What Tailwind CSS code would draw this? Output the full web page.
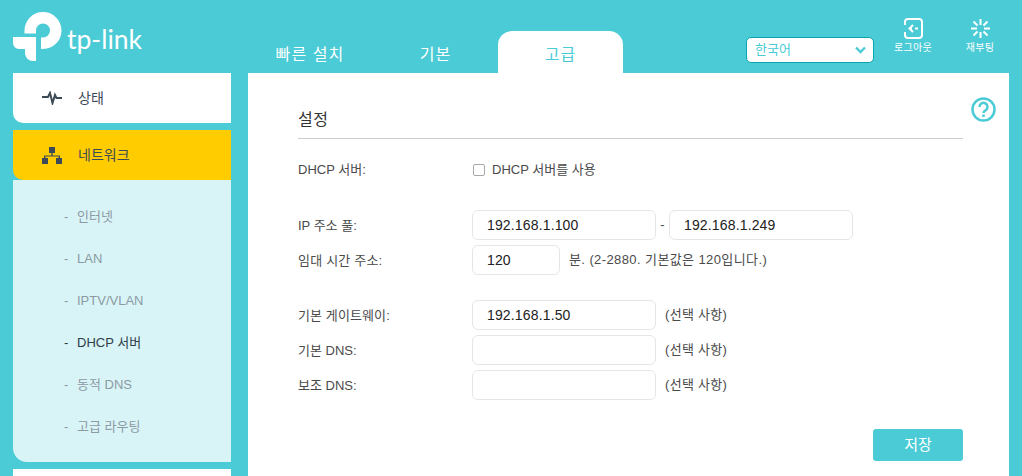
<!DOCTYPE html>
<html lang="ko">
  <head>
    <meta charset="UTF-8">
    <title>TP-Link DHCP</title>
    <script src="https://cdn.jsdelivr.net/npm/@tailwindcss/browser@4"></script>
  </head>
  <body class="h-[476px] w-[1022px] overflow-hidden bg-[#4acbd6] font-['Liberation_Sans','Noto_Sans_CJK_KR',sans-serif] text-[13px] text-[#4a4a4a]">
    <!-- header -->
    <header class="flex h-[73px]">
      <div class="flex w-[248px] shrink-0 items-start pl-[13px] pt-[12px]">
        <svg class="h-[50px] w-[49px] shrink-0" viewBox="0 0 49 50" fill="#fff">
          <path d="M17.250 21.500V18.500A12.750 12.750 0 1 1 30 31.250H28" fill="none" stroke="#fff" stroke-width="11.500"/>
          <path d="M0 25h23v24h-3a8 8 0 0 1-8-8v-4H6a6 6 0 0 1-6-6z"/>
        </svg>
        <span class="ml-[5px] mt-[11px] font-['Lato',sans-serif] text-[26.500px] leading-[32px] text-white">tp-link</span>
      </div>
      <nav class="flex h-full items-end text-[16px] text-white">
        <a class="flex h-[42px] w-[125px] items-center justify-center pt-[5px] pr-[1px] tracking-[1.100px]">빠른 설치</a>
        <a class="flex h-[42px] w-[125px] items-center justify-center pt-[5px] tracking-[1px]">기본</a>
        <a class="flex h-[42px] w-[125px] items-center justify-center rounded-t-[14px] bg-white pt-[5px] tracking-[1px] text-[#4acbd6]">고급</a>
      </nav>
      <div class="ml-[123px] flex h-full items-start">
        <div class="mt-[37px] flex h-[26px] w-[128px] items-center justify-between rounded-[5px] border border-[#0aa5b0] bg-white pl-[8px] pr-[7px] text-[13px] text-[#4acbd6]">
          <span>한국어</span>
          <svg class="h-[8px] w-[11px]" viewBox="0 0 11 8" fill="none" stroke="#4acbd6" stroke-width="2.400"><path d="M1 1.500l4.500 4.500 4.500-4.500"/></svg>
        </div>
        <div class="ml-[19px] mt-[18px] flex w-[40px] flex-col items-center text-[10px] leading-[12px] tracking-[0.3px] text-white">
          <svg class="h-[21px] w-[19px]" viewBox="0 0 19 21" fill="none" stroke="#fff" stroke-width="2">
            <path d="M1 7V4a3 3 0 0 1 3-3h11a3 3 0 0 1 3 3v13a3 3 0 0 1-3 3H4a3 3 0 0 1-3-3v-3"/>
            <path d="M9 7l-3.500 3.500L9 14M6 10.500h2M11 10.500h3"/>
          </svg>
          <span class="mt-[3px] whitespace-nowrap">로그아웃</span>
        </div>
        <div class="ml-[32px] mt-[18px] flex w-[30px] flex-col items-center text-[10px] leading-[12px] tracking-[0.3px] text-white">
          <svg class="h-[21px] w-[21px]" viewBox="0 0 21 21" fill="none" stroke="#fff" stroke-width="2">
            <path d="M10.500 1v6M10.500 14v6M1 10.500h6M14 10.500h6M3.500 3.500l4 4M13.500 13.500l4 4M17.500 3.500l-4 4M7.500 13.500l-4 4"/>
          </svg>
          <span class="mt-[3px] whitespace-nowrap">재부팅</span>
        </div>
      </div>
    </header>

    <div class="flex items-start">
      <!-- sidebar -->
      <aside class="ml-[13px] flex w-[218px] shrink-0 flex-col">
        <div class="flex h-[50px] items-center rounded-bl-[10px] bg-white pl-[29px] text-[14px] text-[#3c4a57]">
          <svg class="h-[14px] w-[20px]" viewBox="0 0 20 14" fill="none" stroke="#3c4a57" stroke-width="2"><path d="M0 6h6l2-4 2.500 10 2.500-8 1.500 3H20"/></svg>
          <span class="ml-[16px]">상태</span>
        </div>
        <div class="mt-[7px] flex h-[50px] items-center rounded-bl-[10px] bg-[#ffcc00] pl-[29px] text-[14px] text-[#3c4a57]">
          <svg class="h-[17px] w-[20px]" viewBox="0 0 20 17" fill="#3c4a57"><path d="M7 0h6v6H7zM0 11h6v6H0zM14 11h6v6h-6zM9.300 6h1.400v2.500H18V11h-1.400V9.500H3.400V11H2V8.500h7.300z"/></svg>
          <span class="ml-[16px]">네트워크</span>
        </div>
        <ul class="flex h-[282px] flex-col rounded-bl-[14px] bg-[#d9f4f7] pl-[51px] pt-[16px] text-[#8b9aa3]">
          <li class="flex h-[42px] items-center"><span class="w-[13px]">-</span>인터넷</li>
          <li class="flex h-[42px] items-center"><span class="w-[13px]">-</span>LAN</li>
          <li class="flex h-[42px] items-center"><span class="w-[13px]">-</span>IPTV/VLAN</li>
          <li class="flex h-[42px] items-center text-[#2e3d48]"><span class="w-[13px]">-</span>DHCP 서버</li>
          <li class="flex h-[42px] items-center"><span class="w-[13px]">-</span>동적 DNS</li>
          <li class="flex h-[42px] items-center"><span class="w-[13px]">-</span>고급 라우팅</li>
        </ul>
        <div class="mt-[7px] h-[20px] bg-white"></div>
      </aside>

      <!-- main panel -->
      <main class="relative ml-[17px] h-[403px] w-[761px] bg-white pl-[50px] pr-[46px]">
        <svg class="absolute right-[13px] top-[24px] h-[25px] w-[25px]" viewBox="0 0 25 25" fill="none" stroke="#4acbd6" stroke-width="2.500">
          <circle cx="12.500" cy="12.500" r="11"/>
          <path d="M8.500 10a4 4 0 1 1 6.500 3c-1.500 1-2.500 1.500-2.500 3"/>
          <path d="M12.500 17.500v2.500"/>
        </svg>
        <h2 class="flex h-[66px] items-end border-b border-[#cccccc] pb-[8px] text-[16px] font-normal leading-[20px] tracking-[0.5px] text-[#333333]">설정</h2>

        <div class="mt-[17px] flex h-[27px] items-center">
          <span class="w-[175px]">DHCP 서버:</span>
          <span class="h-[12px] w-[12px] rounded-[2px] border border-[#a8a8a8]"></span>
          <span class="ml-[7px]">DHCP 서버를 사용</span>
        </div>

        <div class="mt-[27px] flex h-[30px] items-center">
          <span class="w-[174px] pt-[2px]">IP 주소 풀:</span>
          <input class="h-[30px] w-[184px] rounded-[6px] border border-[#e5e5e5] px-[14px] text-[14px] tracking-[0.15px] text-[#222222]" value="192.168.1.100">
          <span class="w-[13px] text-center">-</span>
          <input class="h-[30px] w-[184px] rounded-[6px] border border-[#e5e5e5] px-[14px] text-[14px] tracking-[0.15px] text-[#222222]" value="192.168.1.249">
        </div>
        <div class="mt-[5px] flex h-[30px] items-center">
          <span class="w-[174px] pt-[2px] tracking-[0.2px]">임대 시간 주소:</span>
          <input class="h-[30px] w-[88px] rounded-[6px] border border-[#e5e5e5] px-[14px] text-[14px] tracking-[0.15px] text-[#222222]" value="120">
          <span class="ml-[9px] tracking-[0.4px]">분. (2-2880. 기본값은 120입니다.)</span>
        </div>

        <div class="mt-[25px] flex h-[30px] items-center">
          <span class="w-[174px] pt-[2px] tracking-[0.1px]">기본 게이트웨이:</span>
          <input class="h-[30px] w-[184px] rounded-[6px] border border-[#e5e5e5] px-[14px] text-[14px] tracking-[0.15px] text-[#222222]" value="192.168.1.50">
          <span class="ml-[9px] tracking-[0.3px]">(선택 사항)</span>
        </div>
        <div class="mt-[5px] flex h-[30px] items-center">
          <span class="w-[174px] pt-[2px]">기본 DNS:</span>
          <input class="h-[30px] w-[184px] rounded-[6px] border border-[#e5e5e5] px-[14px] text-[#222222]">
          <span class="ml-[9px] tracking-[0.3px]">(선택 사항)</span>
        </div>
        <div class="mt-[5px] flex h-[30px] items-center">
          <span class="w-[174px] pt-[2px]">보조 DNS:</span>
          <input class="h-[30px] w-[184px] rounded-[6px] border border-[#e5e5e5] px-[14px] text-[#222222]">
          <span class="ml-[9px] tracking-[0.3px]">(선택 사항)</span>
        </div>

        <div class="mt-[29px] flex justify-end">
          <button class="h-[32px] w-[90px] rounded-[3px] bg-[#4acbd6] text-[15px] text-white">저장</button>
        </div>
      </main>
    </div>
  </body>
</html>
